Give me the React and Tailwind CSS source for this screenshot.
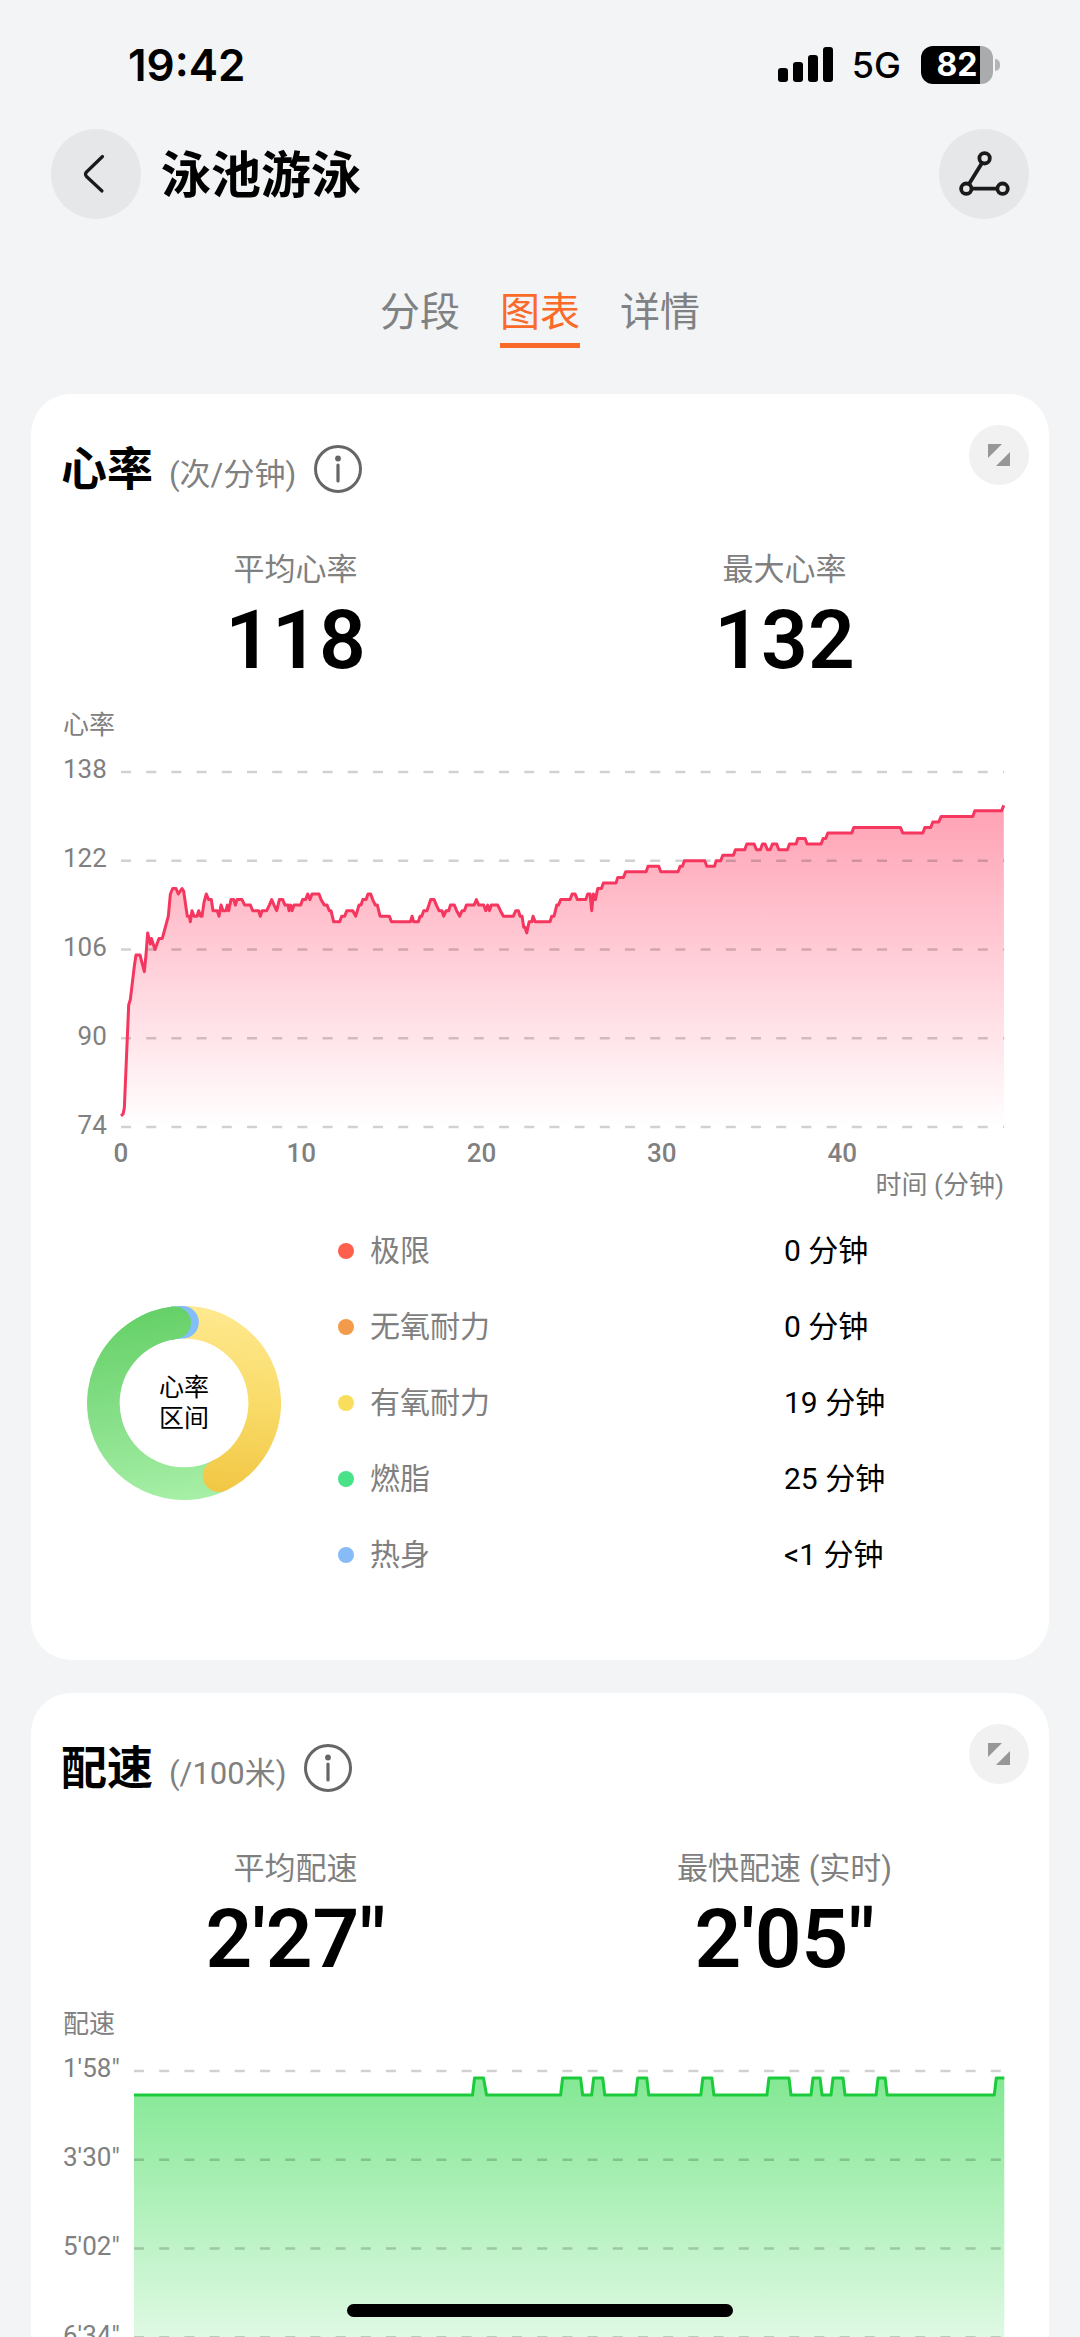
import { useId, useState } from 'react';

const TABS = ['分段', '图表', '详情'];

// [sample, bpm], 2649 samples over the whole session
const HEART_SAMPLES = 2649;
const HEART_RATE = [
  [0, 76], [6, 76.3], [10, 77.5], [23, 96], [28, 97], [40, 103], [45, 105], [57, 105], [70, 102], [75, 105],
  [80, 109], [88, 107], [91, 108], [102, 106], [114, 108], [124, 108], [142, 112], [148, 116], [155, 117], [165, 117],
  [172, 116], [183, 117], [188, 116.5], [194, 114], [199, 112], [205, 112], [208, 111], [213, 113], [219, 112], [228, 112],
  [233, 113], [239, 112], [243, 112], [249, 114.5], [256, 116], [263, 115], [271, 115], [276, 113], [289, 113], [294, 112],
  [300, 114], [306, 113], [315, 113], [319, 114], [323, 113], [330, 115], [338, 115], [343, 114], [348, 115], [363, 115],
  [371, 114], [388, 114], [395, 113], [413, 113], [418, 112], [423, 113], [437, 113], [445, 114], [452, 115], [459, 114],
  [467, 113], [475, 115], [485, 115], [492, 114], [501, 114], [504, 113], [509, 114], [513, 113], [519, 114], [539, 114],
  [545, 115], [554, 115], [560, 116], [567, 115], [573, 116], [594, 116], [600, 115], [610, 114], [618, 114], [625, 113],
  [630, 113], [638, 111], [656, 111], [662, 112], [671, 112], [677, 113], [695, 113], [704, 112], [714, 114], [720, 114],
  [725, 115], [735, 115], [741, 116], [749, 116], [755, 115], [763, 114], [769, 114], [777, 112], [805, 112], [811, 111],
  [868, 111], [873, 112], [878, 111], [892, 111], [897, 112], [902, 112], [908, 113], [918, 113], [929, 115], [939, 115],
  [946, 114], [954, 113], [963, 113], [968, 112], [975, 113], [983, 113], [988, 114], [1000, 114], [1007, 113], [1016, 112],
  [1023, 113], [1030, 113], [1036, 114], [1059, 114], [1066, 115], [1073, 114], [1088, 114], [1094, 113], [1100, 114], [1105, 113],
  [1111, 114], [1130, 114], [1138, 113], [1147, 112], [1177, 112], [1184, 113], [1192, 113], [1197, 112], [1203, 112], [1208, 110],
  [1212, 110], [1217, 109], [1224, 111], [1232, 111], [1236, 112], [1242, 111], [1287, 111], [1292, 112], [1299, 112], [1307, 114],
  [1312, 114], [1319, 115], [1347, 115], [1353, 116], [1362, 116], [1369, 115], [1394, 115], [1400, 116], [1407, 116], [1412, 113],
  [1417, 116], [1423, 115], [1430, 117], [1441, 117], [1447, 118], [1485, 118], [1490, 119], [1507, 119], [1514, 120], [1575, 120],
  [1581, 121], [1613, 121], [1619, 120], [1671, 120], [1677, 121], [1684, 121], [1690, 122], [1751, 122], [1757, 121], [1780, 121],
  [1785, 122], [1799, 122], [1805, 123], [1837, 123], [1843, 124], [1871, 124], [1877, 125], [1899, 125], [1906, 124], [1918, 124],
  [1924, 125], [1932, 125], [1939, 124], [1947, 124], [1954, 125], [1967, 125], [1973, 124], [1999, 124], [2005, 125], [2025, 125],
  [2030, 126], [2052, 126], [2058, 125], [2100, 125], [2106, 126], [2114, 126], [2120, 127], [2192, 127], [2198, 128], [2338, 128],
  [2345, 127], [2405, 127], [2411, 128], [2429, 128], [2435, 129], [2453, 129], [2460, 130], [2555, 130], [2561, 131], [2641, 131],
  [2648, 132],
];

// where the swimmer went faster than the base pace: foot, top, top, foot
const PACE_SAMPLES = 869;
const PACE_BURSTS = [
  [338, 340, 349, 352],
  [426, 428, 446, 448],
  [457, 459, 468, 470],
  [501, 503, 512, 514],
  [566, 568, 577, 579],
  [632, 634, 654, 656],
  [676, 678, 685, 687],
  [696, 698, 708, 710],
  [741, 743, 750, 752],
  [859, 861, 869, 869],
];

const HEART_POINTS = HEART_RATE.map(([x, bpm]) => [(x / HEART_SAMPLES) * 1000, ((138 - bpm) / 64) * 355]);
const PACE_POINTS = [
  [0, 24],
  ...PACE_BURSTS.flatMap(([a, b, c, d]) => [[a, 24], [b, 7], [c, 7], [d, d === c ? 7 : 24]]),
].map(([x, y]) => [(x / PACE_SAMPLES) * 1000, y]);

const ZONES = [
  { name: '极限', value: '0 分钟', dot: 'bg-[#ff604b]' },
  { name: '无氧耐力', value: '0 分钟', dot: 'bg-[#f39b4b]' },
  { name: '有氧耐力', value: '19 分钟', dot: 'bg-[#f9de5d]' },
  { name: '燃脂', value: '25 分钟', dot: 'bg-[#4ae288]' },
  { name: '热身', value: '<1 分钟', dot: 'bg-[#86bbf8]' },
];

function StatusBar() {
  return (
    <div className="flex h-[129px] shrink-0 items-center justify-between pr-20 pl-32 font-['Inter',sans-serif]">
      <span className="text-[44px] font-semibold">19:42</span>
      <div className="flex items-center">
        <svg className="h-9 w-14" viewBox="0 0 56 36" aria-hidden="true">
          <rect x="0" y="21" width="10" height="14" rx="3" />
          <rect x="15" y="15" width="10" height="20" rx="3" />
          <rect x="30" y="8" width="10" height="27" rx="3" />
          <rect x="45" y="0" width="10" height="35" rx="3" />
        </svg>
        <span className="ml-4.5 text-[36px] leading-10 font-medium">5G</span>
        <div className="ml-5 flex h-[38px] w-[72px] items-center justify-center rounded-xl bg-linear-to-r from-black from-82% to-[#aaabac] to-82% text-[32px] font-bold text-white">
          82
        </div>
        <div className="ml-0.5 h-3 w-[5px] rounded-r-full bg-[#b4b5b7]"></div>
      </div>
    </div>
  );
}

function Header() {
  return (
    <header className="flex items-center px-[51px]">
      <button
        type="button"
        aria-label="返回"
        className="flex size-[90px] items-center justify-center rounded-full bg-[#e6e7e9]"
      >
        <svg className="size-12" viewBox="0 0 48 48" fill="none" stroke="#1a1a1a" strokeWidth="3.200" strokeLinecap="round" strokeLinejoin="round">
          <path d="M30.500 6.500 L14.500 22 Q12.500 24 14.500 26.500 L30 41" />
        </svg>
      </button>
      <h1 className="ml-5 flex-1 pt-1 text-[50px] leading-[60px] font-bold">泳池游泳</h1>
      <button
        type="button"
        aria-label="轨迹"
        className="flex size-[90px] items-center justify-center rounded-full bg-[#e6e7e9]"
      >
        <svg className="size-[90px]" viewBox="0 0 90 90" fill="none" stroke="#1a1a1a" strokeWidth="3.800">
          <circle cx="45.600" cy="29.300" r="5.200" />
          <circle cx="27.300" cy="59.700" r="5.200" />
          <circle cx="63.600" cy="59.700" r="5.200" />
          <path d="M43 34 L30 55 M32.500 59.700 H58.400" />
        </svg>
      </button>
    </header>
  );
}

function Tabs() {
  const [active, setActive] = useState('图表');

  return (
    <nav className="mt-[61px] flex justify-center gap-10">
      {TABS.map((tab) => (
        <button
          key={tab}
          type="button"
          onClick={() => setActive(tab)}
          className={`border-b-[5px] pt-[3px] text-[40px] leading-[60px] ${
            tab === active ? 'border-[#fa6a28] text-[#fa6a28]' : 'border-transparent text-[#808183]'
          }`}
        >
          {tab}
        </button>
      ))}
    </nav>
  );
}

function InfoIcon() {
  return (
    <svg className="size-12" viewBox="0 0 48 48" fill="none" stroke="#666" strokeWidth="3">
      <circle cx="24" cy="24" r="22.500" />
      <path d="M24 20 V36" strokeWidth="3.200" strokeLinecap="round" />
      <circle cx="24" cy="13.500" r="2.900" fill="#666" stroke="none" />
    </svg>
  );
}

function Card({ title, unit, children }) {
  return (
    <section className="rounded-[40px] bg-white px-5 pt-[31px] pb-[67px]">
      <div className="flex items-start justify-between">
        <div className="mt-3.5 flex h-[60px] items-center pl-[10px]">
          <div className="flex items-baseline">
            <h2 className="text-[46px] leading-[60px] font-bold">{title}</h2>
            <span className="ml-4 text-[31px] leading-[44px] text-[#808080]">{unit}</span>
          </div>
          <button type="button" aria-label={`${title}说明`} className="ml-4.5">
            <InfoIcon />
          </button>
        </div>
        <button
          type="button"
          aria-label="展开"
          className="flex size-[60px] items-center justify-center rounded-full bg-[#f1f1f1]"
        >
          <svg className="size-6" viewBox="0 0 24 24" fill="#979797">
            <path d="M1 1 H15 L1 15 Z" />
            <path d="M23 9 V23 H9 Z" />
          </svg>
        </button>
      </div>
      {children}
    </section>
  );
}

function Stats({ items }) {
  return (
    <dl className="mt-[46px] flex">
      {items.map((item) => (
        <div key={item.label} className="flex-1 text-center">
          <dt className="text-[31px] leading-[50px] text-[#808080]">{item.label}</dt>
          <dd className="text-[82px] leading-[90px] font-semibold">{item.value}</dd>
        </div>
      ))}
    </dl>
  );
}

function Chart({ title, points, yTicks, top, stroke, fill, opacity }) {
  const id = useId();
  const line = points.map(([x, y]) => `${x.toFixed(1)},${y.toFixed(1)}`).join(' ');

  return (
    <div className="mt-5 pr-[25px] pl-3 text-[26px] text-[#808080]">
      <div className="leading-10">{title}</div>
      <div className="mt-2 flex gap-[14px]">
        <div className="flex h-[388px] shrink-0 flex-col justify-between text-right leading-8">
          {yTicks.map((tick) => (
            <span key={tick}>{tick}</span>
          ))}
        </div>
        <div className="min-w-0 flex-1 pt-[19px]">
          <svg className="block h-[355px] w-full overflow-visible" viewBox="0 0 1000 355" preserveAspectRatio="none" fill="none">
            <defs>
              <linearGradient id={id} gradientUnits="userSpaceOnUse" x1="0" y1={top} x2="0" y2="355">
                <stop offset="0" stopColor={fill} stopOpacity={opacity} />
                <stop offset="1" stopColor={fill} stopOpacity="0" />
              </linearGradient>
            </defs>
            <polygon points={`0,355 ${line} 1000,355`} fill={`url(#${id})`} />
            {yTicks.map((tick, i) => (
              <line
                key={tick}
                x1="0"
                x2="1000"
                y1={i * 88.75}
                y2={i * 88.75}
                stroke="#000"
                strokeOpacity="0.18"
                strokeWidth="2.500"
                strokeDasharray="10 15.200"
                vectorEffect="non-scaling-stroke"
              />
            ))}
            <polyline points={line} stroke={stroke} strokeWidth="3" strokeLinejoin="round" vectorEffect="non-scaling-stroke" />
          </svg>
          <div className="mt-2 flex leading-9 font-medium">
            {[0, 10, 20, 30, 40].map((minute) => (
              <div key={minute} className="w-[20.42%] shrink-0">
                <span className="flex w-0 justify-center">{minute}</span>
              </div>
            ))}
          </div>
          <div className="text-right leading-7">时间 (分钟)</div>
        </div>
      </div>
    </div>
  );
}

function ZoneRing() {
  return (
    <div className="relative ml-9 size-[194px]">
      <svg className="size-full" viewBox="-97 -97 194 194" fill="none" strokeWidth="32.600">
        <defs>
          <linearGradient id="ring-green" gradientUnits="userSpaceOnUse" x1="0" y1="-97" x2="30" y2="97">
            <stop offset="0" stopColor="#66d168" />
            <stop offset="0.500" stopColor="#86df88" />
            <stop offset="1" stopColor="#a8f0a8" />
          </linearGradient>
          <linearGradient id="ring-yellow" gradientUnits="userSpaceOnUse" x1="20" y1="-97" x2="0" y2="97">
            <stop offset="0" stopColor="#ffe98f" />
            <stop offset="0.500" stopColor="#f8da66" />
            <stop offset="1" stopColor="#f1c440" />
          </linearGradient>
        </defs>
        <path d="M35 72.700 A80.700 80.700 0 1 1 -9.300 -80.200" stroke="url(#ring-green)" />
        <path d="M0 -80.700 A80.700 80.700 0 0 1 35 72.700" stroke="url(#ring-yellow)" />
        <circle cx="35" cy="72.700" r="16.300" fill="url(#ring-yellow)" stroke="none" />
        <path d="M-9.300 -80.200 L-1.500 -80.700" stroke="#82bdfc" strokeLinecap="round" />
        <path d="M-69.900 -40.400 A80.700 80.700 0 0 1 -9.300 -80.200" stroke="url(#ring-green)" />
        <circle cx="-9.300" cy="-80.200" r="16.300" fill="url(#ring-green)" stroke="none" />
      </svg>
      <div className="absolute inset-0 flex flex-col items-center justify-center text-[25px] leading-[31px]">
        <span>心率</span>
        <span>区间</span>
      </div>
    </div>
  );
}

function Zones() {
  return (
    <div className="mt-3.5 flex items-center">
      <div className="w-[287px] shrink-0">
        <ZoneRing />
      </div>
      <ul className="flex-1 text-[30px] leading-[76px]">
        {ZONES.map((zone) => (
          <li key={zone.name} className="flex items-center">
            <span className={`size-4 rounded-full ${zone.dot}`}></span>
            <span className="ml-4 flex-1 text-[#808080]">{zone.name}</span>
            <span className="w-[245px]">{zone.value}</span>
          </li>
        ))}
      </ul>
    </div>
  );
}

export default function App() {
  return (
    <div className="relative flex h-screen flex-col overflow-hidden bg-[#f2f4f5] font-['Roboto','Noto_Sans_CJK_SC',sans-serif] text-black">
      <StatusBar />
      <Header />
      <Tabs />
      <main className="mt-[46px] flex flex-col gap-[33px] px-[31px]">
        <Card title="心率" unit="(次/分钟)">
          <Stats
            items={[
              { label: '平均心率', value: '118' },
              { label: '最大心率', value: '132' },
            ]}
          />
          <Chart
            title="心率"
            points={HEART_POINTS}
            yTicks={['138', '122', '106', '90', '74']}
            top={33}
            stroke="#f5365f"
            fill="#ff3b62"
            opacity="0.480"
          />
          <Zones />
        </Card>
        <Card title="配速" unit="(/100米)">
          <Stats
            items={[
              { label: '平均配速', value: '2\'27"' },
              { label: '最快配速 (实时)', value: '2\'05"' },
            ]}
          />
          <Chart
            title="配速"
            points={PACE_POINTS}
            yTicks={['1\'58"', '3\'30"', '5\'02"', '6\'34"', '8\'06"']}
            top={7}
            stroke="#1ccb3c"
            fill="#1ed53c"
            opacity="0.550"
          />
        </Card>
      </main>
      <div className="absolute bottom-5 left-1/2 h-[13px] w-[386px] -translate-x-1/2 rounded-full bg-black"></div>
    </div>
  );
}
